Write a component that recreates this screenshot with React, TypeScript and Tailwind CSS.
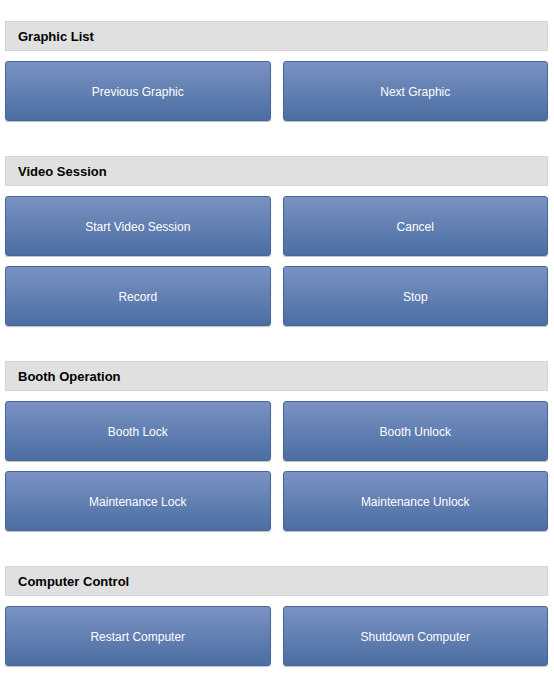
const sections: { title: string; rows: string[][] }[] = [
  { title: 'Graphic List', rows: [['Previous Graphic', 'Next Graphic']] },
  {
    title: 'Video Session',
    rows: [
      ['Start Video Session', 'Cancel'],
      ['Record', 'Stop'],
    ],
  },
  {
    title: 'Booth Operation',
    rows: [
      ['Booth Lock', 'Booth Unlock'],
      ['Maintenance Lock', 'Maintenance Unlock'],
    ],
  },
  { title: 'Computer Control', rows: [['Restart Computer', 'Shutdown Computer']] },
]

function PanelButton({ label }: { label: string }) {
  return (
    <button className="h-[60px] pt-[2px] rounded-[3px] border border-[#46679a] bg-gradient-to-b from-[#7a92c2] to-[#4b6ea2] text-[12px] text-white shadow-[0_1px_1px_rgba(0,0,0,0.25)] font-['Liberation_Sans',Arial,sans-serif]">
      {label}
    </button>
  )
}

export default function App() {
  return (
    <div className="min-h-screen bg-white pt-[21px] pl-[5px] pr-[6px] flex flex-col gap-[35px]">
      {sections.map((section) => (
        <section key={section.title} className="flex flex-col gap-[10px]">
          <div className="h-[30px] pt-[2px] flex items-center px-[12px] bg-[#e0e0e0] border border-[#d4d4d4] text-[13px] font-bold text-black font-['Liberation_Sans',Arial,sans-serif]">
            {section.title}
          </div>
          {section.rows.map((row, i) => (
            <div key={i} className="grid grid-cols-2 gap-[12px]">
              {row.map((label) => (
                <PanelButton key={label} label={label} />
              ))}
            </div>
          ))}
        </section>
      ))}
    </div>
  )
}
